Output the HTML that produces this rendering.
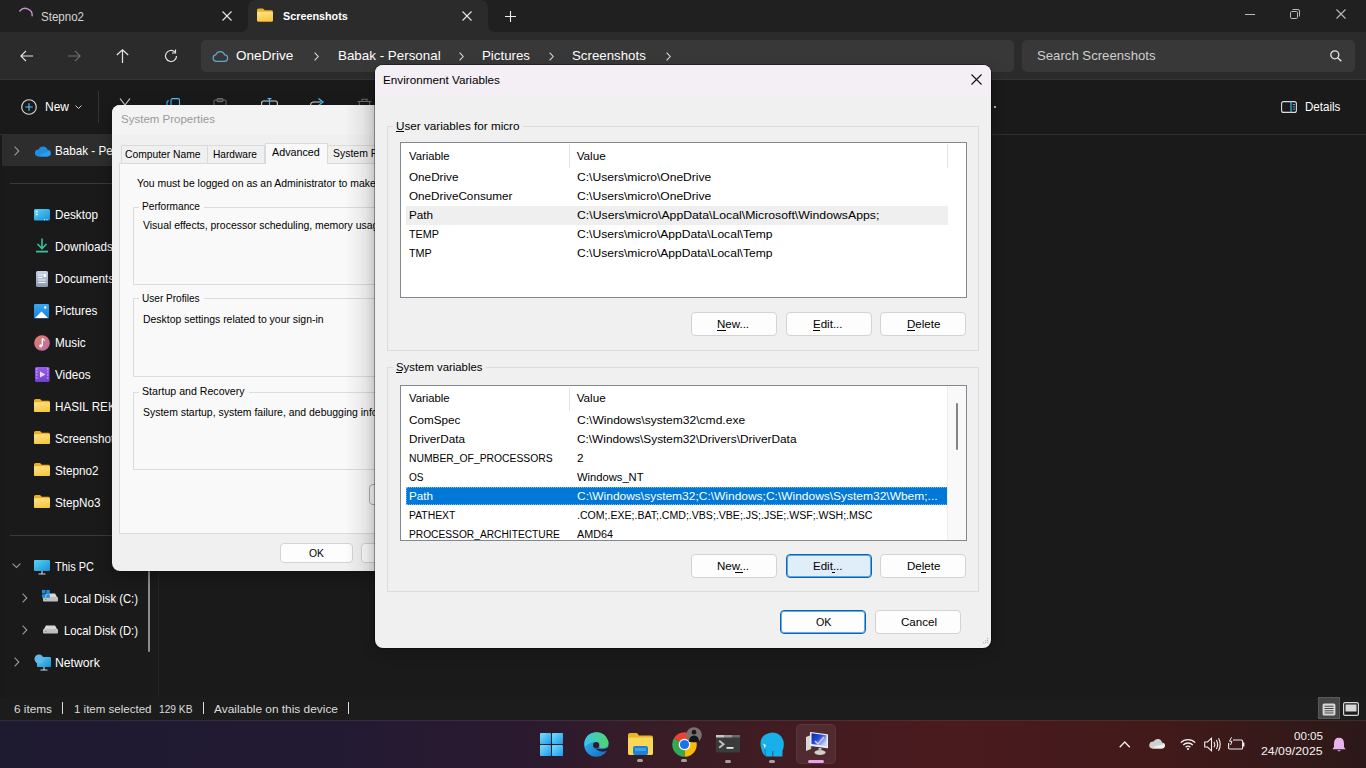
<!DOCTYPE html>
<html><head><meta charset="utf-8">
<style>
*{margin:0;padding:0;box-sizing:border-box}
html,body{width:1366px;height:768px;overflow:hidden;background:#1a1a1a;font-family:"Liberation Sans",sans-serif}
.a{position:absolute}
.t{position:absolute;white-space:nowrap;line-height:1;transform-origin:0 0}
svg{position:absolute;overflow:visible}
.btn{position:absolute;background:#fdfdfd;border:1px solid #d3d3d3;border-radius:4px}
</style></head><body>
<div class="a" style="left:0px;top:0px;width:1366px;height:32px;background:#202020"></div>
<svg style="left:240px;top:0px" width="256" height="32" viewBox="0 0 256 32"><path d="M0 32 Q8 32 8 24 V8 Q8 0 16 0 H240 Q248 0 248 8 V24 Q248 32 256 32 Z" fill="#2b2b2b"/></svg>
<svg style="left:18px;top:6px" width="16" height="16" viewBox="0 0 16 16"><path d="M1.8 5A7 7 0 0 1 14.2 9.7" stroke="#c58fd0" stroke-width="1.5" fill="none" stroke-linecap="round"/></svg>
<div class="t" style="left:41.00px;top:10.84px;font-size:12px;color:#d6d6d6;transform:scaleX(0.9619)">Stepno2</div>
<svg style="left:221.5px;top:11px" width="10" height="10" viewBox="0 0 10 10"><path d="M0.5 0.5L9.5 9.5M9.5 0.5L0.5 9.5" stroke="#e8e8e8" stroke-width="1.1"/></svg>
<svg style="left:461.5px;top:11px" width="10" height="10" viewBox="0 0 10 10"><path d="M0.5 0.5L9.5 9.5M9.5 0.5L0.5 9.5" stroke="#e8e8e8" stroke-width="1.1"/></svg>
<svg style="left:0;top:0" width="0" height="0"><defs><linearGradient id="fg" x1="0" y1="0" x2="0.3" y2="1"><stop offset="0" stop-color="#ffe38a"/><stop offset="1" stop-color="#f6c943"/></linearGradient></defs></svg>
<svg style="left:257px;top:8px" width="16" height="14" viewBox="0 1 16 13"><path d="M0 2.5Q0 1 1.5 1H6L7.8 2.8H14.5Q16 2.8 16 4.3V12.5Q16 14 14.5 14H1.5Q0 14 0 12.5Z" fill="#e8b224"/><path d="M0 5.5Q0 4.2 1.4 4.2H14.6Q16 4.2 16 5.6V12.5Q16 14 14.5 14H1.5Q0 14 0 12.5Z" fill="url(#fg)"/></svg>
<div class="t" style="left:283.20px;top:11.17px;font-size:11.5px;color:#ffffff;font-weight:bold;transform:scaleX(0.9388)">Screenshots</div>
<svg style="left:505px;top:11px" width="11" height="11" viewBox="0 0 11 11"><path d="M5.5 0V11M0 5.5H11" stroke="#eee" stroke-width="1.1"/></svg>
<svg style="left:1245px;top:14px" width="10" height="1" viewBox="0 0 10 1"><path d="M0 0.5H10" stroke="#bbb" stroke-width="1"/></svg>
<svg style="left:1290px;top:9px" width="10" height="10" viewBox="0 0 10 10"><rect x="0.5" y="2.5" width="7" height="7" rx="1.2" fill="none" stroke="#bbb"/><path d="M2.5 0.5H8Q9.5 0.5 9.5 2V7.5" fill="none" stroke="#bbb"/></svg>
<svg style="left:1336px;top:9px" width="10" height="10" viewBox="0 0 10 10"><path d="M0.5 0.5L9.5 9.5M9.5 0.5L0.5 9.5" stroke="#bbb" stroke-width="1.1"/></svg>
<div class="a" style="left:0px;top:32px;width:1366px;height:47px;background:#2b2b2b"></div>
<div class="a" style="left:0px;top:79px;width:1366px;height:1px;background:#353535"></div>
<div class="a" style="left:201px;top:40px;width:813px;height:32px;background:#383838;border-radius:5px"></div>
<div class="a" style="left:1022px;top:40px;width:333px;height:32px;background:#383838;border-radius:5px"></div>
<svg style="left:20px;top:50px" width="13" height="12" viewBox="0 0 13 12"><path d="M6 0.8L0.9 6L6 11.2M0.9 6H13" stroke="#e6e6e6" stroke-width="1.2" fill="none"/></svg>
<svg style="left:68px;top:50px" width="13" height="12" viewBox="0 0 13 12"><path d="M7 0.8L12.1 6L7 11.2M12.1 6H0" stroke="#6e6e6e" stroke-width="1.2" fill="none"/></svg>
<svg style="left:116px;top:49px" width="13" height="14" viewBox="0 0 13 14"><path d="M0.8 6L6.5 0.9L12.2 6M6.5 0.9V14" stroke="#e6e6e6" stroke-width="1.2" fill="none"/></svg>
<svg style="left:164px;top:49px" width="14" height="14" viewBox="0 0 14 14"><path d="M12.5 7A5.5 5.5 0 1 1 10.9 3.1" stroke="#e6e6e6" stroke-width="1.2" fill="none"/><path d="M11.5 0.5V4H8" stroke="#e6e6e6" stroke-width="1.2" fill="none"/></svg>
<svg style="left:212px;top:50px" width="16" height="12" viewBox="0 0 16 12"><path d="M4 11.3H12.3A3.2 3.2 0 0 0 12.6 4.9A4.6 4.6 0 0 0 3.9 4.6A3.4 3.4 0 0 0 4 11.3Z" stroke="#5ea6cf" stroke-width="1.2" fill="none"/></svg>
<div class="t" style="left:236.30px;top:49.47px;font-size:13.5px;color:#ffffff;transform:scaleX(1.0050)">OneDrive</div>
<div class="t" style="left:338.00px;top:49.47px;font-size:13.5px;color:#ffffff;transform:scaleX(0.9908)">Babak - Personal</div>
<div class="t" style="left:482.10px;top:49.47px;font-size:13.5px;color:#ffffff;transform:scaleX(0.9843)">Pictures</div>
<div class="t" style="left:572.30px;top:49.47px;font-size:13.5px;color:#ffffff;transform:scaleX(0.9835)">Screenshots</div>
<svg style="left:314px;top:52px" width="5" height="9" viewBox="0 0 5 9"><path d="M0.6 0.6L4.2 4.5L0.6 8.4" stroke="#dcdcdc" stroke-width="1.1" fill="none"/></svg>
<svg style="left:459px;top:52px" width="5" height="9" viewBox="0 0 5 9"><path d="M0.6 0.6L4.2 4.5L0.6 8.4" stroke="#dcdcdc" stroke-width="1.1" fill="none"/></svg>
<svg style="left:549px;top:52px" width="5" height="9" viewBox="0 0 5 9"><path d="M0.6 0.6L4.2 4.5L0.6 8.4" stroke="#dcdcdc" stroke-width="1.1" fill="none"/></svg>
<svg style="left:666px;top:52px" width="5" height="9" viewBox="0 0 5 9"><path d="M0.6 0.6L4.2 4.5L0.6 8.4" stroke="#dcdcdc" stroke-width="1.1" fill="none"/></svg>
<div class="t" style="left:1037.00px;top:49.47px;font-size:13.5px;color:#cfcfcf;transform:scaleX(0.9748)">Search Screenshots</div>
<svg style="left:1330px;top:50px" width="12" height="12" viewBox="0 0 12 12"><circle cx="4.8" cy="4.8" r="4" stroke="#e6e6e6" stroke-width="1.3" fill="none"/><path d="M7.7 7.7L11.3 11.3" stroke="#e6e6e6" stroke-width="1.4"/></svg>
<div class="a" style="left:0px;top:80px;width:1366px;height:54px;background:#1a1a1a"></div>
<div class="a" style="left:0px;top:134px;width:1366px;height:1px;background:#2e2e2e"></div>
<svg style="left:21px;top:99px" width="16" height="16" viewBox="0 0 16 16"><circle cx="8" cy="8" r="7.3" stroke="#dedede" stroke-width="1.1" fill="none"/><path d="M8 4.3V11.7M4.3 8H11.7" stroke="#4cc2ff" stroke-width="1.2"/></svg>
<div class="t" style="left:45.00px;top:101.42px;font-size:12.5px;color:#ffffff;transform:scaleX(0.9598)">New</div>
<svg style="left:75px;top:105px" width="7" height="4" viewBox="0 0 7 4"><path d="M0.5 0.5L3.5 3.5L6.5 0.5" stroke="#cfcfcf" stroke-width="1" fill="none"/></svg>
<div class="a" style="left:98px;top:91px;width:1px;height:32px;background:#353535"></div>
<svg style="left:119px;top:98px" width="12" height="8" viewBox="0 0 12 8"><path d="M1 0.5L6 7M11 0.5L6 7" stroke="#dcdcdc" stroke-width="1.1" fill="none"/></svg>
<svg style="left:165px;top:98px" width="16" height="8" viewBox="0 0 16 8"><rect x="6" y="0.6" width="8.5" height="10" rx="1.5" stroke="#4cc2ff" stroke-width="1.1" fill="none"/><path d="M2 10V4Q2 2.8 4 2.8" stroke="#4cc2ff" stroke-width="1.1" fill="none"/></svg>
<svg style="left:213px;top:98px" width="14" height="8" viewBox="0 0 14 8"><rect x="1" y="2" width="12" height="10" rx="1.5" stroke="#6a6a6a" stroke-width="1.1" fill="none"/><rect x="4" y="0.6" width="6" height="3" rx="1" stroke="#6a6a6a" stroke-width="1.1" fill="none"/></svg>
<svg style="left:261px;top:98px" width="17" height="8" viewBox="0 0 17 8"><rect x="0.6" y="3" width="15.8" height="8" rx="2" stroke="#dcdcdc" stroke-width="1.1" fill="none"/><path d="M8.5 0.6V11M6.5 0.6H10.5" stroke="#4cc2ff" stroke-width="1.1" fill="none"/></svg>
<svg style="left:310px;top:98px" width="15" height="8" viewBox="0 0 15 8"><path d="M0.6 10V7Q0.6 4 4 4H11" stroke="#dcdcdc" stroke-width="1.1" fill="none"/><path d="M8.5 0.6L13 4L8.5 7.4" stroke="#4cc2ff" stroke-width="1.2" fill="none"/></svg>
<svg style="left:357px;top:98px" width="15" height="8" viewBox="0 0 15 8"><path d="M0.6 3.5H14.4M5 3.5V1.2H10V3.5M2.2 3.5L3 12H12L12.8 3.5" stroke="#6a6a6a" stroke-width="1.1" fill="none"/></svg>
<div class="a" style="left:994px;top:106px;width:2.4px;height:2.4px;background:#e0e0e0;border-radius:1px"></div>
<svg style="left:1281px;top:101px" width="16" height="12" viewBox="0 0 16 12"><rect x="0.6" y="0.6" width="14.8" height="10.8" rx="2" stroke="#dedede" stroke-width="1.1" fill="none"/><path d="M10 0.6V11.4" stroke="#4cc2ff" stroke-width="1.1"/><path d="M11.8 3.5H14M11.8 5.8H14M11.8 8.1H14" stroke="#4cc2ff" stroke-width="0.9"/></svg>
<div class="t" style="left:1305.20px;top:101.42px;font-size:12.5px;color:#ffffff;transform:scaleX(0.9265)">Details</div>
<div class="a" style="left:0px;top:135px;width:2px;height:562px;background:#191919"></div>
<div class="a" style="left:2px;top:135px;width:148px;height:31px;background:#2d2d2d"></div>
<div class="a" style="left:158px;top:135px;width:1px;height:562px;background:#232323"></div>
<svg style="left:14px;top:146px" width="6" height="10" viewBox="0 0 6 10"><path d="M0.6 0.6L4.8 5L0.6 9.4" stroke="#9a9a9a" stroke-width="1.1" fill="none"/></svg>
<svg style="left:34px;top:145px" width="17" height="12" viewBox="0 0 17 12"><path d="M4.3 11.4H13.4A3.3 3.3 0 0 0 13.6 4.8A4.8 4.8 0 0 0 4.6 4.4A3.5 3.5 0 0 0 4.3 11.4Z" fill="#1e8fdf"/><path d="M5 11.4H13.4A3.3 3.3 0 0 0 16 6.2L8 8.5Z" fill="#2b9cf0"/></svg>
<div class="t" style="left:55.20px;top:144.50px;font-size:12.4px;color:#ffffff;transform:scaleX(0.9420)">Babak - Personal</div>
<div class="a" style="left:10px;top:183px;width:140px;height:1px;background:#3a3a3a"></div>
<div class="t" style="left:55.20px;top:208.70px;font-size:12.4px;color:#ffffff;transform:scaleX(0.9452)">Desktop</div>
<div class="t" style="left:55.20px;top:240.70px;font-size:12.4px;color:#ffffff;transform:scaleX(0.9452)">Downloads</div>
<div class="t" style="left:55.20px;top:272.70px;font-size:12.4px;color:#ffffff;transform:scaleX(0.9452)">Documents</div>
<div class="t" style="left:55.20px;top:304.70px;font-size:12.4px;color:#ffffff;transform:scaleX(0.9452)">Pictures</div>
<div class="t" style="left:55.20px;top:336.70px;font-size:12.4px;color:#ffffff;transform:scaleX(0.9452)">Music</div>
<div class="t" style="left:55.20px;top:368.70px;font-size:12.4px;color:#ffffff;transform:scaleX(0.9452)">Videos</div>
<div class="t" style="left:55.20px;top:400.70px;font-size:12.4px;color:#ffffff;transform:scaleX(0.9452)">HASIL REKAMAN</div>
<div class="t" style="left:55.20px;top:432.70px;font-size:12.4px;color:#ffffff;transform:scaleX(0.9452)">Screenshots</div>
<div class="t" style="left:55.20px;top:464.70px;font-size:12.4px;color:#ffffff;transform:scaleX(0.9452)">Stepno2</div>
<div class="t" style="left:55.20px;top:496.70px;font-size:12.4px;color:#ffffff;transform:scaleX(0.9452)">StepNo3</div>
<svg style="left:0;top:0" width="0" height="0"><defs><linearGradient id="dg" x1="0" y1="0" x2="1" y2="1"><stop offset="0" stop-color="#57d4f5"/><stop offset="1" stop-color="#1a8ed8"/></linearGradient><linearGradient id="pg" x1="0" y1="0" x2="0" y2="1"><stop offset="0" stop-color="#3aa8f0"/><stop offset="1" stop-color="#1680d8"/></linearGradient><linearGradient id="mg" x1="0" y1="0" x2="1" y2="1"><stop offset="0" stop-color="#e8806a"/><stop offset="1" stop-color="#b86aa8"/></linearGradient><linearGradient id="vg" x1="0" y1="0" x2="0" y2="1"><stop offset="0" stop-color="#9a5ef0"/><stop offset="1" stop-color="#7040d0"/></linearGradient><linearGradient id="docg" x1="0" y1="0" x2="0" y2="1"><stop offset="0" stop-color="#c8d4e4"/><stop offset="1" stop-color="#8898b0"/></linearGradient></defs></svg>
<svg style="left:34px;top:209px" width="16" height="12" viewBox="0 0 16 12"><rect x="0" y="0" width="16" height="11.5" rx="1.5" fill="url(#dg)"/><rect x="1.8" y="1.8" width="1.8" height="1.6" fill="#fff"/><rect x="1.8" y="4.6" width="1.8" height="1.6" fill="#fff"/><rect x="10" y="10.2" width="1" height="1" fill="#fff"/><rect x="12.5" y="10.2" width="1" height="1" fill="#fff"/></svg>
<svg style="left:36px;top:238px" width="12" height="15" viewBox="0 0 12 15"><path d="M6 0.5V10M1.5 6L6 10.5L10.5 6" stroke="#3bbf9e" stroke-width="1.6" fill="none"/><path d="M0 13.6H12" stroke="#3bbf9e" stroke-width="1.8"/></svg>
<svg style="left:36px;top:271px" width="12" height="16" viewBox="0 0 12 16"><rect x="0" y="0" width="12" height="16" rx="1.5" fill="url(#docg)"/><path d="M2.2 4H6.5M2.2 6.5H6.5M2.2 9H9.8M2.2 11.5H9.8" stroke="#fff" stroke-width="0.9"/><rect x="7.5" y="3" width="2.5" height="3" fill="#fff"/></svg>
<svg style="left:34px;top:304px" width="16" height="15" viewBox="0 0 16 15"><rect x="0" y="0" width="15" height="14.5" rx="1.2" fill="url(#pg)"/><path d="M1 14L7.5 7.5L14 14Z" fill="#fff"/><circle cx="11.2" cy="3.5" r="1.2" fill="#fff"/></svg>
<svg style="left:34px;top:335px" width="16" height="16" viewBox="0 0 16 16"><circle cx="8" cy="8" r="7.8" fill="url(#mg)"/><path d="M8.3 3.5V10.8" stroke="#fff" stroke-width="1.3"/><circle cx="6.8" cy="10.8" r="1.6" fill="#fff"/><path d="M8.3 3.5Q10 4 10.5 5.8" stroke="#fff" stroke-width="1.1" fill="none"/></svg>
<svg style="left:35px;top:367px" width="15" height="15" viewBox="0 0 15 15"><rect x="0" y="0" width="14.5" height="15" rx="1.5" fill="url(#vg)"/><path d="M5 4.5L10.5 7.5L5 10.5Z" fill="#e8dcff"/><path d="M1 2H2.4M1 5H2.4M1 8H2.4M1 11H2.4M12 2H13.4M12 5H13.4M12 8H13.4M12 11H13.4" stroke="#d6c4ff" stroke-width="1.2"/></svg>
<svg style="left:34px;top:399px" width="16" height="13" viewBox="0 1 16 13"><path d="M0 2.5Q0 1 1.5 1H6L7.8 2.8H14.5Q16 2.8 16 4.3V12.5Q16 14 14.5 14H1.5Q0 14 0 12.5Z" fill="#e8b224"/><path d="M0 5.5Q0 4.2 1.4 4.2H14.6Q16 4.2 16 5.6V12.5Q16 14 14.5 14H1.5Q0 14 0 12.5Z" fill="url(#fg)"/></svg>
<svg style="left:34px;top:431px" width="16" height="13" viewBox="0 1 16 13"><path d="M0 2.5Q0 1 1.5 1H6L7.8 2.8H14.5Q16 2.8 16 4.3V12.5Q16 14 14.5 14H1.5Q0 14 0 12.5Z" fill="#e8b224"/><path d="M0 5.5Q0 4.2 1.4 4.2H14.6Q16 4.2 16 5.6V12.5Q16 14 14.5 14H1.5Q0 14 0 12.5Z" fill="url(#fg)"/></svg>
<svg style="left:34px;top:463px" width="16" height="13" viewBox="0 1 16 13"><path d="M0 2.5Q0 1 1.5 1H6L7.8 2.8H14.5Q16 2.8 16 4.3V12.5Q16 14 14.5 14H1.5Q0 14 0 12.5Z" fill="#e8b224"/><path d="M0 5.5Q0 4.2 1.4 4.2H14.6Q16 4.2 16 5.6V12.5Q16 14 14.5 14H1.5Q0 14 0 12.5Z" fill="url(#fg)"/></svg>
<svg style="left:34px;top:495px" width="16" height="13" viewBox="0 1 16 13"><path d="M0 2.5Q0 1 1.5 1H6L7.8 2.8H14.5Q16 2.8 16 4.3V12.5Q16 14 14.5 14H1.5Q0 14 0 12.5Z" fill="#e8b224"/><path d="M0 5.5Q0 4.2 1.4 4.2H14.6Q16 4.2 16 5.6V12.5Q16 14 14.5 14H1.5Q0 14 0 12.5Z" fill="url(#fg)"/></svg>
<div class="a" style="left:10px;top:535px;width:140px;height:1px;background:#3a3a3a"></div>
<svg style="left:12px;top:563px" width="9" height="5" viewBox="0 0 9 5"><path d="M0.6 0.6L4.5 4.4L8.4 0.6" stroke="#9a9a9a" stroke-width="1.1" fill="none"/></svg>
<svg style="left:34px;top:560px" width="16" height="15" viewBox="0 0 16 15"><rect x="0" y="0" width="16" height="11" rx="1" fill="url(#dg)"/><path d="M8 11V13.5M4.5 14H11.5" stroke="#c8d8e8" stroke-width="1.2"/></svg>
<div class="t" style="left:55.20px;top:560.70px;font-size:12.4px;color:#ffffff;transform:scaleX(0.8799)">This PC</div>
<svg style="left:22px;top:593px" width="6" height="10" viewBox="0 0 6 10"><path d="M0.6 0.6L4.8 5L0.6 9.4" stroke="#9a9a9a" stroke-width="1.1" fill="none"/></svg>
<svg style="left:42px;top:590px" width="16" height="13" viewBox="0 0 16 13"><path d="M2 7L4 3.5H13L15 7Z" fill="#d8d8d8"/><rect x="1" y="7" width="15" height="4.5" rx="0.8" fill="#bfbfbf"/><rect x="3" y="9" width="1.4" height="1" fill="#3c3"/><rect x="0" y="0" width="3.5" height="3.5" fill="#1a8fe8"/><rect x="4.3" y="0" width="3.5" height="3.5" fill="#1a8fe8"/><rect x="0" y="4.3" width="3.5" height="3.5" fill="#1a8fe8"/><rect x="4.3" y="4.3" width="3.5" height="3.5" fill="#1a8fe8"/></svg>
<div class="t" style="left:63.50px;top:592.70px;font-size:12.4px;color:#ffffff;transform:scaleX(0.9102)">Local Disk (C:)</div>
<svg style="left:22px;top:625px" width="6" height="10" viewBox="0 0 6 10"><path d="M0.6 0.6L4.8 5L0.6 9.4" stroke="#9a9a9a" stroke-width="1.1" fill="none"/></svg>
<svg style="left:42px;top:622px" width="16" height="13" viewBox="0 0 16 13"><path d="M2 7L4 3.5H13L15 7Z" fill="#d8d8d8"/><rect x="1" y="7" width="15" height="4.5" rx="0.8" fill="#bfbfbf"/><rect x="3" y="9" width="1.4" height="1" fill="#3c3"/></svg>
<div class="t" style="left:63.50px;top:624.70px;font-size:12.4px;color:#ffffff;transform:scaleX(0.9102)">Local Disk (D:)</div>
<svg style="left:14px;top:657px" width="6" height="10" viewBox="0 0 6 10"><path d="M0.6 0.6L4.8 5L0.6 9.4" stroke="#9a9a9a" stroke-width="1.1" fill="none"/></svg>
<svg style="left:34px;top:654px" width="17" height="17" viewBox="0 0 17 17"><rect x="3" y="3" width="14" height="10" rx="1" fill="url(#dg)"/><circle cx="5" cy="5" r="4.5" fill="#62b8e8"/><path d="M10 13V15.5M6.5 16H13.5" stroke="#c8d8e8" stroke-width="1.2"/></svg>
<div class="t" style="left:55.20px;top:656.70px;font-size:12.4px;color:#ffffff;transform:scaleX(0.9852)">Network</div>
<div class="a" style="left:147.5px;top:571px;width:2px;height:81px;background:#8b8b8b;border-radius:1px"></div>
<div class="a" style="left:0px;top:697px;width:1366px;height:23px;background:#1c1c1c"></div>
<div class="t" style="left:14.00px;top:702.88px;font-size:11.6px;color:#dddddd;transform:scaleX(1.0164)">6 items</div>
<div class="a" style="left:62px;top:702px;width:1px;height:12px;background:#dddddd"></div>
<div class="t" style="left:73.50px;top:702.88px;font-size:11.6px;color:#dddddd;transform:scaleX(0.9934)">1 item selected</div>
<div class="t" style="left:158.50px;top:702.88px;font-size:11.6px;color:#dddddd;transform:scaleX(0.8804)">129 KB</div>
<div class="a" style="left:203px;top:702px;width:1px;height:12px;background:#dddddd"></div>
<div class="t" style="left:214.00px;top:702.88px;font-size:11.6px;color:#dddddd;transform:scaleX(1.0247)">Available on this device</div>
<div class="a" style="left:348px;top:702px;width:1px;height:12px;background:#dddddd"></div>
<div class="a" style="left:1318px;top:697px;width:22px;height:22px;background:#464646;border:1px solid #5a5a5a"></div>
<svg style="left:1322px;top:703px" width="14" height="13" viewBox="0 0 14 13"><rect x="0.6" y="0.6" width="12.8" height="11.8" rx="1.5" fill="#d8d8d8"/><path d="M2.5 3.2H11.5M2.5 5.5H11.5M2.5 7.8H11.5M2.5 10H11.5" stroke="#333" stroke-width="0.9"/></svg>
<svg style="left:1343px;top:702px" width="16" height="14" viewBox="0 0 16 14"><rect x="0.6" y="0.6" width="14.8" height="12.8" rx="1.5" fill="none" stroke="#d8d8d8" stroke-width="1.2"/><rect x="2.5" y="2.5" width="11" height="7" fill="#d8d8d8"/></svg>
<div class="a" style="left:0px;top:720px;width:1366px;height:48px;background:linear-gradient(90deg,#1e1a30 0%,#221a33 25%,#2c1a2e 40%,#361c28 46%,#3c1c24 52%,#441b20 60%,#491a1e 70%,#421a1a 85%,#2c1818 100%)"></div>
<div class="a" style="left:0px;top:720px;width:1366px;height:1px;background:rgba(255,255,255,0.08)"></div>
<svg style="left:0;top:0" width="0" height="0"><defs><linearGradient id="sg" x1="0" y1="0" x2="1" y2="1"><stop offset="0" stop-color="#7ae0fa"/><stop offset="1" stop-color="#1a9af0"/></linearGradient><linearGradient id="eg" x1="0" y1="0" x2="1" y2="1"><stop offset="0" stop-color="#35c1f1"/><stop offset="0.6" stop-color="#1f8ad8"/><stop offset="1" stop-color="#1467b8"/></linearGradient><linearGradient id="scg" x1="0" y1="0" x2="1" y2="0.6"><stop offset="0" stop-color="#0a2ab0"/><stop offset="0.5" stop-color="#2848d0"/><stop offset="1" stop-color="#c8d0f8"/></linearGradient><linearGradient id="eg2" x1="0" y1="0" x2="1" y2="0"><stop offset="0" stop-color="#3bc6e8"/><stop offset="1" stop-color="#52d46a"/></linearGradient></defs></svg>
<svg style="left:540px;top:733px" width="23" height="23" viewBox="0 0 23 23"><rect x="0" y="0" width="11" height="11" rx="0.8" fill="url(#sg)"/><rect x="12" y="0" width="11" height="11" rx="0.8" fill="url(#sg)"/><rect x="0" y="12" width="11" height="11" rx="0.8" fill="url(#sg)"/><rect x="12" y="12" width="11" height="11" rx="0.8" fill="url(#sg)"/></svg>
<svg style="left:584px;top:731.5px" width="25" height="25" viewBox="0 0 25 25"><circle cx="12.3" cy="12.5" r="12.2" fill="url(#eg)"/><path d="M0.6 11Q2 1.5 12 0.3Q21.5 0.3 24.4 9.5Q25.3 15 20.5 16Q15.5 16.5 14.2 13.5Q13.5 10 10 10Q5 10.5 1 14.5Z" fill="url(#eg2)"/><circle cx="12.2" cy="13.2" r="3.1" fill="#2e1b2e"/><path d="M13 16.6Q19 18.3 24.4 15.6L23.6 18.6Q18 21 12.4 17.8Z" fill="#2e1b2e"/></svg>
<svg style="left:627.5px;top:733px" width="25" height="22" viewBox="0 0 25 22"><path d="M0 2Q0 0 2 0H9L11 2.5H23Q25 2.5 25 4.5V20Q25 22 23 22H2Q0 22 0 20Z" fill="#e8b820"/><path d="M0 6Q0 4.5 1.5 4.5H23.5Q25 4.5 25 6V20Q25 22 23 22H2Q0 22 0 20Z" fill="#fcd757"/><rect x="5" y="13" width="15" height="9" rx="2" fill="#1f7fd0"/><rect x="7" y="15" width="11" height="3" fill="#3aa0f0"/></svg>
<div class="a" style="left:637px;top:759px;width:6px;height:3px;background:#a8a0a0;border-radius:2px"></div>
<svg style="left:671.5px;top:732px" width="25" height="25" viewBox="0 0 25 25"><path d="M12.5 12.5L1.85 6.35A12.3 12.3 0 0 1 23.15 6.35Z" fill="#ea4335"/><path d="M12.5 12.5L23.15 6.35A12.3 12.3 0 0 1 12.5 24.8Z" fill="#fbbc04"/><path d="M12.5 12.5L12.5 24.8A12.3 12.3 0 0 1 1.85 6.35Z" fill="#34a853"/><circle cx="12.5" cy="12.5" r="5.8" fill="#fff"/><circle cx="12.5" cy="12.5" r="4.6" fill="#1a73e8"/></svg>
<svg style="left:686px;top:727px" width="16" height="16" viewBox="0 0 16 16"><circle cx="8" cy="8" r="7.8" fill="#7a7272"/><circle cx="8" cy="5.2" r="2.4" fill="#1b1b1b"/><path d="M3 15Q3 8.5 8 8.5Q13 8.5 13 15Z" fill="#151515"/></svg>
<div class="a" style="left:681px;top:759px;width:6px;height:3px;background:#a8a0a0;border-radius:2px"></div>
<svg style="left:716px;top:735px" width="24" height="18" viewBox="0 0 24 18"><rect x="0" y="0" width="24" height="17.5" rx="1.2" fill="#3b3b3b"/><rect x="0" y="0" width="8" height="2.5" fill="#c8c8c8"/><rect x="8" y="0" width="8" height="2.5" fill="#9a9a9a"/><rect x="16" y="0" width="8" height="2.5" fill="#6a6a6a"/><path d="M3.2 5.8L7.5 9.3L3.2 12.8" stroke="#c0c0c0" stroke-width="2" fill="none"/><rect x="10.5" y="12" width="7" height="1.8" fill="#e8e8e8"/></svg>
<div class="a" style="left:725px;top:760px;width:6px;height:3px;background:#a8a0a0;border-radius:2px"></div>
<svg style="left:760px;top:731.5px" width="24" height="25" viewBox="0 0 24 25"><path d="M12 0.5Q21 0.5 23.5 9Q24.5 14 22.5 19V24.5H13.2V19H12.6V24.5H6Q3 23 2 19Q0.3 15 0.5 11Q1 2 12 0.5Z" fill="#17b0e8"/><path d="M3 11.5L6 13L4.8 16.5Z" fill="#d8f4ff"/><path d="M5 17Q4.5 21 6 23.5" stroke="#0d6e96" stroke-width="0.8" fill="none"/></svg>
<div class="a" style="left:769px;top:760px;width:6px;height:3px;background:#a8a0a0;border-radius:2px"></div>
<div class="a" style="left:796px;top:724px;width:40px;height:40px;background:rgba(255,255,255,0.07);border-radius:5px;border:1px solid rgba(255,255,255,0.06)"></div>
<svg style="left:804px;top:733px" width="24" height="22" viewBox="0 0 24 22"><path d="M2 4L7 2V16L2 18Z" fill="#d8d8d8"/><path d="M7 2V16" stroke="#aaa" stroke-width="0.6"/><rect x="6" y="0" width="18" height="14" rx="0.6" fill="#e8eef8" transform="skewY(8) translate(0,-2)"/><rect x="7.5" y="1.2" width="15" height="10.8" fill="url(#scg)" transform="skewY(8) translate(0,-2)"/><path d="M11 8L14 11L20 4" stroke="#cce" stroke-width="1.5" fill="none"/><ellipse cx="16" cy="19.5" rx="5.5" ry="2.5" fill="#d0d0d0"/><path d="M14.5 15V18H17.5V15" fill="#bbb"/></svg>
<div class="a" style="left:808px;top:760px;width:16px;height:3px;background:#e8a4ea;border-radius:2px"></div>
<svg style="left:1118.5px;top:740.5px" width="11.5" height="7" viewBox="0 0 11.5 7"><path d="M0.7 6.3L5.75 1L10.8 6.3" stroke="#f0f0f0" stroke-width="1.3" fill="none"/></svg>
<svg style="left:1147.5px;top:738px" width="17" height="11" viewBox="0 0 17 11"><path d="M4 10.5H13.8A3 3 0 0 0 14 4.5A4.5 4.5 0 0 0 5.6 3.6A3.4 3.4 0 0 0 4 10.5Z" fill="#d0d0d0"/><path d="M4 10.5H13.8A3 3 0 0 0 16.5 6L8 8Z" fill="#f0f0f0"/></svg>
<svg style="left:1180px;top:738px" width="16" height="12" viewBox="0 0 16 12"><path d="M0.8 4.6A10.3 10.3 0 0 1 15.2 4.6M3.2 7A6.8 6.8 0 0 1 12.8 7M5.6 9.3A3.4 3.4 0 0 1 10.4 9.3" stroke="#f0f0f0" stroke-width="1.3" fill="none"/><circle cx="8" cy="11" r="1.1" fill="#f0f0f0"/></svg>
<svg style="left:1204px;top:737px" width="17" height="15" viewBox="0 0 17 15"><path d="M0.7 5H3.5L7.5 1.2V13.8L3.5 10H0.7Z" stroke="#f0f0f0" stroke-width="1.1" fill="none"/><path d="M10 4.7Q11.5 7.5 10 10.3M12.3 3Q15 7.5 12.3 12M14.5 1.3Q18 7.5 14.5 13.7" stroke="#f0f0f0" stroke-width="1.1" fill="none"/></svg>
<svg style="left:1228px;top:737px" width="17" height="13" viewBox="0 0 17 13"><path d="M5 3H13.5Q14.6 3 14.6 4.1V10.9Q14.6 12 13.5 12H1.7Q0.6 12 0.6 10.9V6" stroke="#f0f0f0" stroke-width="1.1" fill="none"/><rect x="15" y="5.5" width="1.4" height="4" fill="#f0f0f0"/><path d="M3.5 0.3L1.5 4.3H4L2.5 8" stroke="#f0f0f0" stroke-width="1" fill="none"/></svg>
<div class="t" style="left:1294.00px;top:730.63px;font-size:11.3px;color:#f2f2f2;transform:scaleX(1.0257)">00:05</div>
<div class="t" style="left:1261.40px;top:746.13px;font-size:11.3px;color:#f2f2f2;transform:scaleX(1.0893)">24/09/2025</div>
<svg style="left:1331.5px;top:737px" width="14" height="15" viewBox="0 0 14 15"><path d="M7 0.8Q12 0.8 12 6.5V10L13.6 12.2H0.4L2 10V6.5Q2 0.8 7 0.8Z" fill="#e8b3ec"/><path d="M5 13.3Q7 15.5 9 13.3Z" fill="#e8b3ec"/></svg>
<div class="a" style="left:112px;top:105px;width:300px;height:466px;background:#f0f0f0;border-radius:8px;box-shadow:0 4px 14px rgba(0,0,0,.35)"></div>
<div class="a" style="left:112px;top:105px;width:300px;height:30px;background:#f3f3f3;border-radius:8px 8px 0 0"></div>
<div class="t" style="left:121.40px;top:113.97px;font-size:11.5px;color:#9a9a9a;transform:scaleX(1.0006)">System Properties</div>
<div class="a" style="left:120.5px;top:144.5px;width:87px;height:19px;background:#f0f0f0;border:1px solid #dadada;border-bottom:none"></div>
<div class="a" style="left:207.5px;top:144.5px;width:57.5px;height:19px;background:#f0f0f0;border:1px solid #dadada;border-bottom:none;border-left:none"></div>
<div class="a" style="left:328px;top:144.5px;width:60px;height:19px;background:#f0f0f0;border:1px solid #dadada;border-bottom:none;border-left:none"></div>
<div class="a" style="left:118.5px;top:162.5px;width:280px;height:371px;background:#f9f9f9;border:1px solid #dadada"></div>
<div class="a" style="left:265px;top:142.5px;width:63px;height:21px;background:#f9f9f9;border:1px solid #dadada;border-bottom:none"></div>
<div class="t" style="left:125.40px;top:148.86px;font-size:10.8px;color:#000;transform:scaleX(0.9543)">Computer Name</div>
<div class="t" style="left:212.50px;top:148.86px;font-size:10.8px;color:#000;transform:scaleX(0.9399)">Hardware</div>
<div class="t" style="left:272.20px;top:146.66px;font-size:10.8px;color:#000;transform:scaleX(0.9951)">Advanced</div>
<div class="t" style="left:333.10px;top:148.36px;font-size:10.8px;color:#000;transform:scaleX(0.9676)">System Protection</div>
<div class="t" style="left:137.40px;top:178.36px;font-size:10.8px;color:#000;transform:scaleX(0.9676)">You must be logged on as an Administrator to make most of these changes.</div>
<div class="a" style="left:133px;top:206.6px;width:260px;height:78.4px;background:transparent;border:1px solid #dcdcdc"></div>
<div class="a" style="left:139px;top:200.6px;width:65px;height:12px;background:#f9f9f9"></div>
<div class="t" style="left:142.40px;top:201.26px;font-size:10.8px;color:#000;transform:scaleX(0.9382)">Performance</div>
<div class="t" style="left:143.40px;top:220.26px;font-size:10.8px;color:#000;transform:scaleX(0.9676)">Visual effects, processor scheduling, memory usage, and virtual memory</div>
<div class="a" style="left:133px;top:298.2px;width:260px;height:78.80000000000001px;background:transparent;border:1px solid #dcdcdc"></div>
<div class="a" style="left:139px;top:292.2px;width:64.6px;height:12px;background:#f9f9f9"></div>
<div class="t" style="left:142.40px;top:292.86px;font-size:10.8px;color:#000;transform:scaleX(0.9318)">User Profiles</div>
<div class="t" style="left:143.40px;top:313.66px;font-size:10.8px;color:#000;transform:scaleX(0.9676)">Desktop settings related to your sign-in</div>
<div class="a" style="left:133px;top:391.6px;width:260px;height:78.69999999999999px;background:transparent;border:1px solid #dcdcdc"></div>
<div class="a" style="left:139px;top:385.6px;width:109.6px;height:12px;background:#f9f9f9"></div>
<div class="t" style="left:142.40px;top:386.26px;font-size:10.8px;color:#000;transform:scaleX(0.9823)">Startup and Recovery</div>
<div class="t" style="left:143.40px;top:406.66px;font-size:10.8px;color:#000;transform:scaleX(0.9676)">System startup, system failure, and debugging information</div>
<div class="a" style="left:369px;top:484px;width:30px;height:21px;background:#fdfdfd;border:1px solid #b0b0b0;border-radius:4px"></div>
<div class="btn" style="left:280px;top:542.5px;width:72.5px;height:20px"></div>
<div class="t" style="left:308.50px;top:547.66px;font-size:10.8px;color:#000;transform:scaleX(0.9613)">OK</div>
<div class="btn" style="left:361px;top:542.5px;width:72.5px;height:20px"></div>
<div class="a" style="left:345px;top:105px;width:30px;height:466px;background:linear-gradient(90deg,rgba(0,0,0,0),rgba(0,0,0,0.10))"></div>
<div class="a" style="left:375px;top:65px;width:616px;height:583px;border-radius:8px;background:#f0f0f0;overflow:hidden;box-shadow:0 0 0 1px rgba(0,0,0,.35),0 4px 14px rgba(0,0,0,.22)"><div class="a" style="left:0;top:0;width:616px;height:30px;background:#f3eff5"></div><div class="a" style="left:0;top:30px;width:616px;height:8px;background:linear-gradient(#f2eff3,#f0f0f0)"></div></div>
<div class="t" style="left:383.40px;top:73.80px;font-size:11.7px;color:#000;transform:scaleX(1.0014)">Environment Variables</div>
<svg style="left:971px;top:74px" width="11" height="11" viewBox="0 0 11 11"><path d="M0.5 0.5L10.5 10.5M10.5 0.5L0.5 10.5" stroke="#111" stroke-width="1.1"/></svg>
<div class="a" style="left:387px;top:125.5px;width:592px;height:225px;background:transparent;border:1px solid #dcdcdc"></div>
<div class="a" style="left:393px;top:119.5px;width:129.6px;height:12px;background:#f0f0f0"></div>
<div class="t" style="left:396.00px;top:119.50px;font-size:11.7px;color:#000;transform:scaleX(1.0006)">User variables for micro</div>
<div class="a" style="left:396px;top:130.5px;width:8px;height:1px;background:#000"></div>
<div class="a" style="left:400px;top:142px;width:567px;height:156px;background:#fff;border:1px solid #828790;overflow:hidden">
<div class="a" style="left:-401px;top:-143px;width:1366px;height:768px">
<div class="a" style="left:569px;top:144px;width:1px;height:24px;background:#e5e5e5"></div>
<div class="a" style="left:406px;top:206px;width:541.5px;height:19px;background:#efefef"></div>
<div class="a" style="left:947px;top:144px;width:1px;height:24px;background:#e5e5e5"></div>
<div class="t" style="left:408.50px;top:149.70px;font-size:11.7px;color:#000;transform:scaleX(0.9654)">Variable</div>
<div class="t" style="left:576.70px;top:149.70px;font-size:11.7px;color:#000;transform:scaleX(1.0000)">Value</div>
<div class="t" style="left:408.50px;top:171.40px;font-size:11.7px;color:#000;transform:scaleX(1.0017)">OneDrive</div>
<div class="t" style="left:576.70px;top:171.40px;font-size:11.7px;color:#000;transform:scaleX(1.0342)">C:\Users\micro\OneDrive</div>
<div class="t" style="left:408.50px;top:190.40px;font-size:11.7px;color:#000;transform:scaleX(1.0012)">OneDriveConsumer</div>
<div class="t" style="left:576.70px;top:190.40px;font-size:11.7px;color:#000;transform:scaleX(1.0342)">C:\Users\micro\OneDrive</div>
<div class="t" style="left:408.50px;top:209.40px;font-size:11.7px;color:#000;transform:scaleX(1.0017)">Path</div>
<div class="t" style="left:576.70px;top:209.40px;font-size:11.7px;color:#000;transform:scaleX(1.0482)">C:\Users\micro\AppData\Local\Microsoft\WindowsApps;</div>
<div class="t" style="left:408.50px;top:228.40px;font-size:11.7px;color:#000;transform:scaleX(0.9231)">TEMP</div>
<div class="t" style="left:576.70px;top:228.40px;font-size:11.7px;color:#000;transform:scaleX(1.0342)">C:\Users\micro\AppData\Local\Temp</div>
<div class="t" style="left:408.50px;top:247.40px;font-size:11.7px;color:#000;transform:scaleX(0.9231)">TMP</div>
<div class="t" style="left:576.70px;top:247.40px;font-size:11.7px;color:#000;transform:scaleX(1.0342)">C:\Users\micro\AppData\Local\Temp</div>
</div></div>
<div class="btn" style="left:691px;top:312px;width:86px;height:24px"></div>
<div class="t" style="left:717.30px;top:317.90px;font-size:11.7px;color:#000;transform:scaleX(0.9872)">New...</div>
<div class="a" style="left:717.3px;top:329.5px;width:9px;height:1px;background:#000"></div>
<div class="btn" style="left:786px;top:312px;width:86px;height:24px"></div>
<div class="t" style="left:813.00px;top:317.90px;font-size:11.7px;color:#000;transform:scaleX(0.9872)">Edit...</div>
<div class="a" style="left:813px;top:329.5px;width:7px;height:1px;background:#000"></div>
<div class="btn" style="left:880px;top:312px;width:86px;height:24px"></div>
<div class="t" style="left:906.50px;top:317.90px;font-size:11.7px;color:#000;transform:scaleX(0.9872)">Delete</div>
<div class="a" style="left:906.5px;top:329.5px;width:8px;height:1px;background:#000"></div>
<div class="a" style="left:387px;top:366.5px;width:592px;height:225px;background:transparent;border:1px solid #dcdcdc"></div>
<div class="a" style="left:393px;top:360.5px;width:92.5px;height:12px;background:#f0f0f0"></div>
<div class="t" style="left:396.00px;top:360.50px;font-size:11.7px;color:#000;transform:scaleX(0.9711)">System variables</div>
<div class="a" style="left:396px;top:371.5px;width:6px;height:1px;background:#000"></div>
<div class="a" style="left:400px;top:384.5px;width:567px;height:156px;background:#fff;border:1px solid #828790;overflow:hidden">
<div class="a" style="left:-401px;top:-385.5px;width:1366px;height:768px">
<div class="a" style="left:569px;top:386.5px;width:1px;height:24px;background:#e5e5e5"></div>
<div class="a" style="left:406px;top:486.5px;width:541.5px;height:18.5px;background:#0078d7;outline:1px dotted #7fb8e8;outline-offset:-1px"></div>
<div class="a" style="left:947px;top:385.5px;width:19px;height:154px;background:#f9f9f9;border-left:1px solid #ededed"></div>
<div class="a" style="left:956px;top:402.5px;width:2.2px;height:47px;background:#858585;border-radius:1px"></div>
<div class="t" style="left:408.50px;top:392.20px;font-size:11.7px;color:#000;transform:scaleX(0.9654)">Variable</div>
<div class="t" style="left:576.70px;top:392.20px;font-size:11.7px;color:#000;transform:scaleX(1.0000)">Value</div>
<div class="t" style="left:408.50px;top:413.90px;font-size:11.7px;color:#000;transform:scaleX(1.0017)">ComSpec</div>
<div class="t" style="left:576.70px;top:413.90px;font-size:11.7px;color:#000;transform:scaleX(1.0313)">C:\Windows\system32\cmd.exe</div>
<div class="t" style="left:408.50px;top:432.90px;font-size:11.7px;color:#000;transform:scaleX(1.0017)">DriverData</div>
<div class="t" style="left:576.70px;top:432.90px;font-size:11.7px;color:#000;transform:scaleX(1.0118)">C:\Windows\System32\Drivers\DriverData</div>
<div class="t" style="left:408.50px;top:451.90px;font-size:11.7px;color:#000;transform:scaleX(0.8847)">NUMBER_OF_PROCESSORS</div>
<div class="t" style="left:576.70px;top:451.90px;font-size:11.7px;color:#000;transform:scaleX(1.0017)">2</div>
<div class="t" style="left:408.50px;top:470.90px;font-size:11.7px;color:#000;transform:scaleX(0.8637)">OS</div>
<div class="t" style="left:576.70px;top:470.90px;font-size:11.7px;color:#000;transform:scaleX(0.9573)">Windows_NT</div>
<div class="t" style="left:408.50px;top:489.90px;font-size:11.7px;color:#fff;transform:scaleX(1.0017)">Path</div>
<div class="t" style="left:576.70px;top:489.90px;font-size:11.7px;color:#fff;transform:scaleX(1.0242)">C:\Windows\system32;C:\Windows;C:\Windows\System32\Wbem;...</div>
<div class="t" style="left:408.50px;top:508.90px;font-size:11.7px;color:#000;transform:scaleX(0.8885)">PATHEXT</div>
<div class="t" style="left:576.70px;top:508.90px;font-size:11.7px;color:#000;transform:scaleX(0.9034)">.COM;.EXE;.BAT;.CMD;.VBS;.VBE;.JS;.JSE;.WSF;.WSH;.MSC</div>
<div class="t" style="left:408.50px;top:527.90px;font-size:11.7px;color:#000;transform:scaleX(0.8732)">PROCESSOR_ARCHITECTURE</div>
<div class="t" style="left:576.70px;top:527.90px;font-size:11.7px;color:#000;transform:scaleX(0.9231)">AMD64</div>
</div></div>
<div class="btn" style="left:691px;top:554px;width:86px;height:24px"></div>
<div class="t" style="left:717.30px;top:559.90px;font-size:11.7px;color:#000;transform:scaleX(0.9872)">New...</div>
<div class="a" style="left:735.3px;top:571.5px;width:8px;height:1px;background:#000"></div>
<div class="btn" style="left:786px;top:554px;width:86px;height:24px;background:#e0eef9;border:1px solid #0067c0;box-shadow:inset 0 0 0 1px rgba(0,103,192,.55)"></div>
<div class="t" style="left:813.00px;top:559.90px;font-size:11.7px;color:#000;transform:scaleX(0.9872)">Edit...</div>
<div class="a" style="left:832px;top:571.5px;width:3px;height:1px;background:#000"></div>
<div class="btn" style="left:880px;top:554px;width:86px;height:24px"></div>
<div class="t" style="left:906.50px;top:559.90px;font-size:11.7px;color:#000;transform:scaleX(0.9872)">Delete</div>
<div class="a" style="left:920.5px;top:571.5px;width:5px;height:1px;background:#000"></div>
<div class="btn" style="left:780px;top:610px;width:86px;height:24px;border:1px solid #0067c0;box-shadow:inset 0 0 0 1px rgba(0,103,192,.55)"></div>
<div class="btn" style="left:875px;top:610px;width:86px;height:24px"></div>
<div class="t" style="left:815.50px;top:615.90px;font-size:11.7px;color:#000;transform:scaleX(0.9169)">OK</div>
<div class="t" style="left:900.50px;top:615.90px;font-size:11.7px;color:#000;transform:scaleX(0.9915)">Cancel</div>
<svg style="left:982px;top:637px" width="7" height="7" viewBox="0 0 7 7"><rect x="5" y="1" width="1.2" height="1.2" fill="#b8b8b8"/><rect x="3" y="3" width="1.2" height="1.2" fill="#b8b8b8"/><rect x="5" y="3" width="1.2" height="1.2" fill="#b8b8b8"/><rect x="1" y="5" width="1.2" height="1.2" fill="#b8b8b8"/><rect x="3" y="5" width="1.2" height="1.2" fill="#b8b8b8"/><rect x="5" y="5" width="1.2" height="1.2" fill="#b8b8b8"/></svg>
</body></html>
